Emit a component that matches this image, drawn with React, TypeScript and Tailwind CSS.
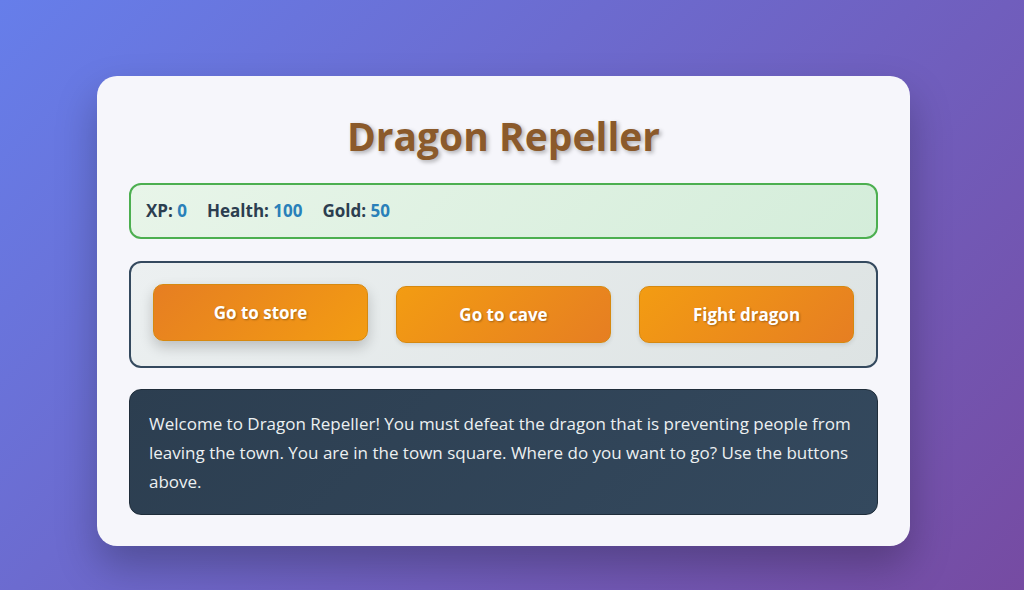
import React from 'react';

const stats = [
  { label: 'XP', value: 0 },
  { label: 'Health', value: 100 },
  { label: 'Gold', value: 50 },
];

const buttons = ['Go to store', 'Go to cave', 'Fight dragon'];

export default function App() {
  return (
    <div
      className="min-h-[590px] w-full flex justify-center pr-[17px] pt-[76px] bg-[linear-gradient(135deg,#667eea_0%,#764ba2_100%)]"
      style={{ fontFamily: '"Open Sans", "Noto Sans", sans-serif' }}
    >
      <div className="w-[813px] h-[470px] rounded-[20px] bg-[#f6f6fb] px-8 pt-[34px] shadow-[0_20px_40px_rgba(0,0,0,0.25)]">
        <h1 className="text-center text-[39px] leading-[52px] font-bold text-[#8b5a2b] [text-shadow:2px_2px_4px_rgba(0,0,0,0.3)]">
          Dragon Repeller
        </h1>

        {/* Stats */}
        <div className="mt-[21px] h-[56px] flex items-center gap-[20px] px-[15px] rounded-[12px] border-2 border-[#4caf50] bg-[linear-gradient(135deg,#e8f5e9,#d4edda)] text-[17px] font-bold text-[#2c3e50]">
          {stats.map((s) => (
            <span key={s.label}>
              {s.label}: <span className="text-[#2980b9]">{s.value}</span>
            </span>
          ))}
        </div>

        {/* Controls */}
        <div className="mt-[22px] h-[107px] flex items-center justify-between px-[22px] rounded-[12px] border-2 border-[#34495e] bg-[linear-gradient(135deg,#ecf0f1,#dde3e3)]">
          {buttons.map((b, i) => (
            <button
              key={b}
              className={`w-[215px] h-[57px] rounded-[10px] border border-[#d68910] text-white text-[17px] font-bold [text-shadow:1px_1px_2px_rgba(0,0,0,0.3)] ${
                i === 0
                  ? 'bg-[linear-gradient(135deg,#e67e22,#f39c12)] -translate-y-[2px] shadow-[0_6px_14px_rgba(0,0,0,0.2)]'
                  : 'bg-[linear-gradient(135deg,#f39c12,#e67e22)] shadow-[0_2px_4px_rgba(0,0,0,0.1)]'
              }`}
            >
              {b}
            </button>
          ))}
        </div>

        {/* Text */}
        <div className="mt-[21px] h-[126px] rounded-[12px] border border-[#1f2d3a] bg-[linear-gradient(135deg,#2c3e50,#34495e)] px-[19px] pt-[19px] text-[17px] leading-[29px] text-[#ecf0f1]">
          Welcome to Dragon Repeller! You must defeat the dragon that is preventing people from leaving the town. You are
          in the town square. Where do you want to go? Use the buttons above.
        </div>
      </div>
    </div>
  );
}
